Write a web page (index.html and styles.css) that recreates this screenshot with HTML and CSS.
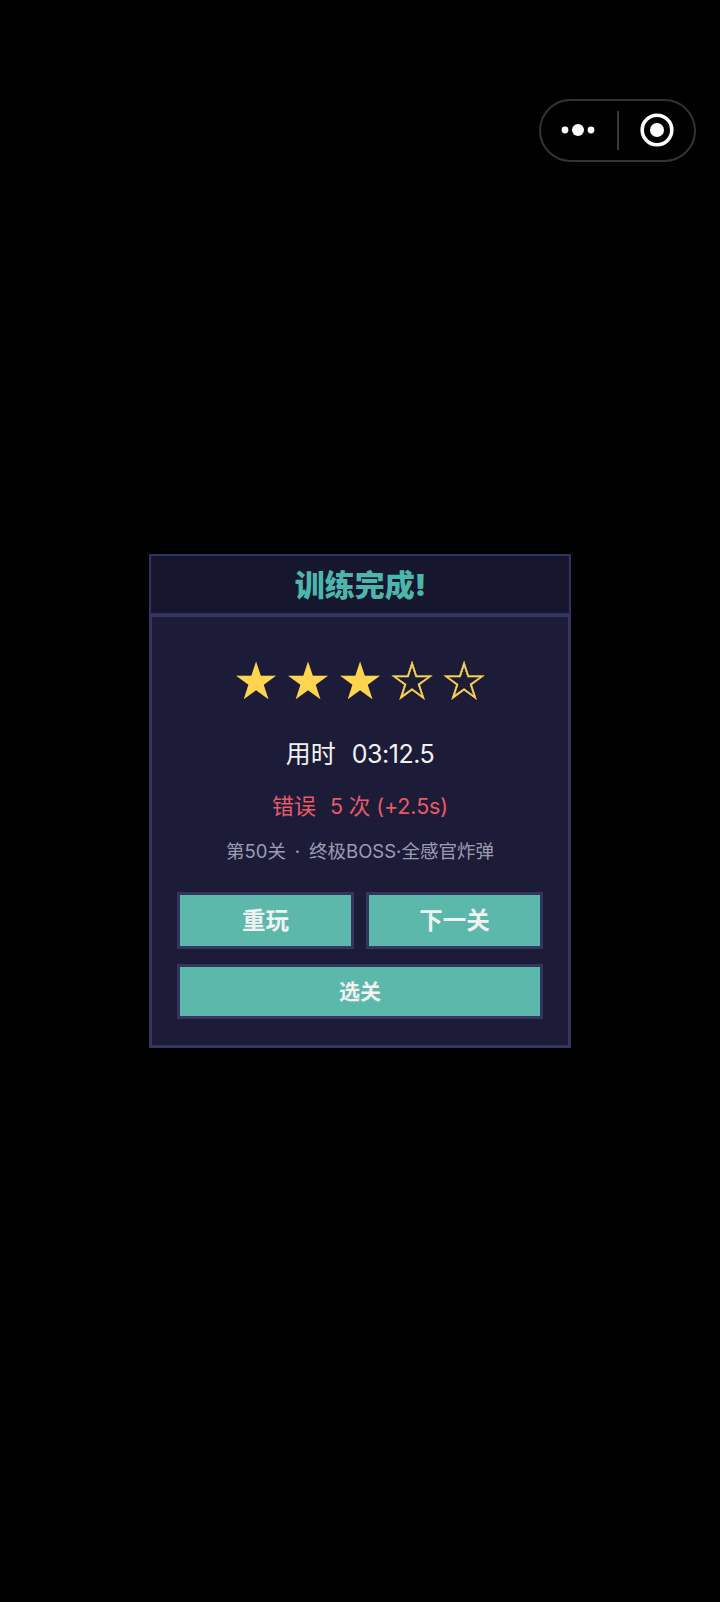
FILE: index.html
```html
<!DOCTYPE html>
<html lang="zh-CN">
<head>
<meta charset="utf-8">
<title>训练完成</title>
<link rel="stylesheet" href="styles.css">
</head>
<body>
<div class="capsule">
  <svg class="cap-more" viewBox="0 0 34 12" width="34" height="12"><circle cx="4" cy="6" r="3.4"/><circle cx="17" cy="6" r="6"/><circle cx="30" cy="6" r="3.4"/></svg>
  <span class="cap-line"></span>
  <svg class="cap-target" viewBox="0 0 34 34" width="34" height="34"><circle class="ring" cx="17" cy="17" r="14.8"/><circle cx="17" cy="17" r="7"/></svg>
</div>
<main class="card">
  <header class="head">训练完成!</header>
  <section class="body">
    <div class="stars"><span>★</span><span>★</span><span>★</span><span class="empty">☆</span><span class="empty">☆</span></div>
    <p class="time">用时<span class="num">03:12.5</span></p>
    <p class="errors">错误<span class="num">5 次 (+2.5s)</span></p>
    <p class="level">第50关&nbsp; ·&nbsp; 终极BOSS·全感官炸弹</p>
    <div class="actions">
      <button class="btn big">重玩</button>
      <button class="btn big">下一关</button>
      <button class="btn wide">选关</button>
    </div>
  </section>
</main>
</body>
</html>
```
FILE: styles.css
```css
* { box-sizing: border-box; }
html, body { margin: 0; height: 100%; background: #000; }
body {
  display: flex; align-items: center; justify-content: center;
  min-height: 1602px;
  font-family: Inter, "Noto Sans CJK SC", sans-serif;
}
.capsule {
  position: absolute; left: 539px; top: 99px; width: 157px; height: 63px;
  border: 2px solid #333; border-radius: 32px;
  display: flex; align-items: center;
}
.cap-more { position: absolute; left: 20px; top: 23px; fill: #fff; }
.cap-line { position: absolute; left: 76px; top: 10px; width: 2px; height: 39px; background: #3a3a3a; }
.cap-target { position: absolute; left: 99px; top: 12px; fill: #fff; }
.cap-target .ring { fill: none; stroke: #fff; stroke-width: 3.6; }

.card { width: 422px; height: 494px; display: flex; flex-direction: column; }
.head {
  height: 60px; flex: none;
  background: #16162e; border: 2px solid #33335f; border-bottom-width: 1px;
  color: #4db6ac; font-size: 30px; font-weight: 900; line-height: 59px; text-align: center;
  padding-left: 1px;
}
.body {
  flex: 1;
  background: #1c1c38; border: 3px solid #35355f;
  padding: 34px 24px 0;
  display: flex; flex-direction: column; align-items: center;
}
.stars {
  display: flex; height: 60px; color: #ffd54f;
  font-family: "DejaVu Sans", sans-serif; font-size: 52px; line-height: 60px;
}
.stars span { width: 52px; text-align: center; }
.stars .empty { -webkit-text-stroke: 0.5px #ffd54f; }
.time, .errors, .level { margin: 0; text-align: center; white-space: nowrap; }
.time { color: #f2f2f2; font-size: 25px; line-height: 36px; margin-top: 25px; }
.time .num { margin-left: 16px; letter-spacing: -0.5px; }
.errors { color: #e85a68; font-size: 22px; line-height: 32px; margin-top: 18px; }
.errors .num { margin-left: 14px; font-size: 21.5px; letter-spacing: -0.1px; }
.level { color: #9c9cb2; font-size: 18.5px; line-height: 28px; margin-top: 15px; word-spacing: -0.75px; }
.actions {
  width: 366px; margin-top: 27px;
  display: grid; grid-template-columns: 1fr 1fr; column-gap: 12px; row-gap: 15px;
}
.btn {
  background: #5bb8ab; border: 3px solid #35355f; border-radius: 0; padding: 0 0 3px;
  color: #f2f2f2; font-family: inherit; font-weight: 700; text-align: center;
}
.big { height: 57px; font-size: 23.5px; }
.wide { grid-column: 1 / 3; height: 55px; font-size: 21px; }
```
